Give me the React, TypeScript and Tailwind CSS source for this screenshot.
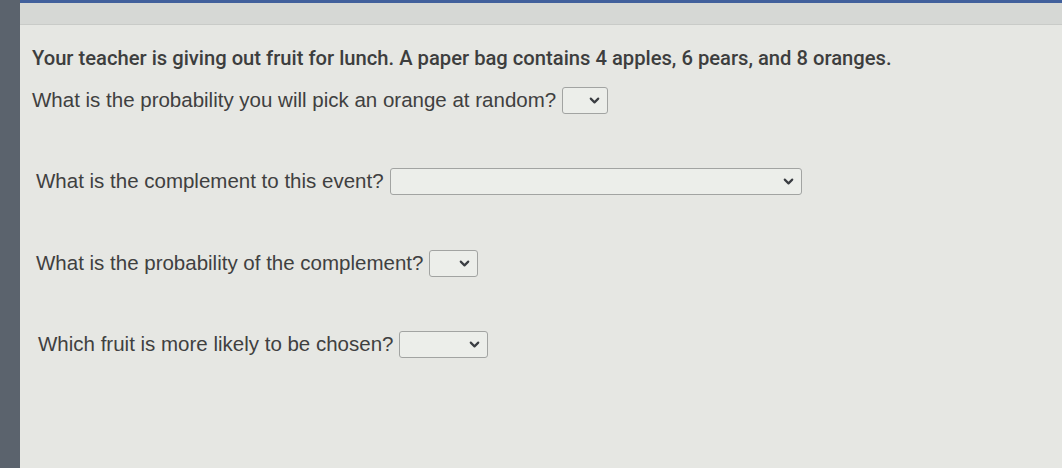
import { ChevronDown } from "lucide-react";

function Pick({ w }: { w: string }) {
  return (
    <div
      className={`ml-[6px] h-[27px] ${w} flex items-center justify-end pr-[5px] border-[1.5px] border-[#a2a4a2] rounded-[3px] bg-[#eceeea]`}
    >
      <ChevronDown size={15} strokeWidth={3.4} color="#3a3d42" />
    </div>
  );
}

export default function App() {
  return (
    <div
      className="w-[1062px] h-[468px] flex overflow-hidden bg-[#e6e7e3] text-[#3f4040]"
      style={{ fontFamily: '"Liberation Sans", Arial, sans-serif' }}
    >
      <div className="w-[20px] h-full bg-[#5b636d]" />
      <div className="flex-1 flex flex-col">
        <div className="h-[3px] bg-[#41609c]" />
        <div className="h-[22px] bg-[#d6d8d5] border-b border-[#c9cbc8]" />
        <div className="flex flex-col pl-[12px] pt-[18px] text-[20.5px]">
          <div
            className="h-[30px] flex items-center font-medium text-[20.2px] text-[#3d3e3e]"
            style={{ fontFamily: "Roboto, sans-serif" }}
          >
            Your teacher is giving out fruit for lunch. A paper bag contains 4
            apples, 6 pears, and 8 oranges.
          </div>
          <div className="h-[30px] mt-[12px] flex items-center">
            What is the probability you will pick an orange at random?
            <Pick w="w-[46px]" />
          </div>
          <div className="h-[30px] mt-[51px] flex items-center pl-[4px]">
            What is the complement to this event?
            <Pick w="w-[412px]" />
          </div>
          <div className="h-[30px] mt-[52px] flex items-center pl-[4px]">
            What is the probability of the complement?
            <Pick w="w-[49px]" />
          </div>
          <div className="h-[30px] mt-[51px] flex items-center pl-[6px]">
            Which fruit is more likely to be chosen?
            <Pick w="w-[89px]" />
          </div>
        </div>
      </div>
    </div>
  );
}
